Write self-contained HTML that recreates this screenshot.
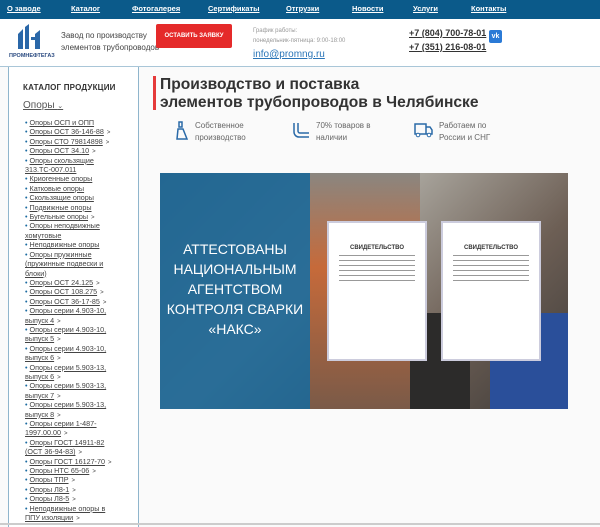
<!DOCTYPE html>
<html><head><meta charset="utf-8"><style>
*{margin:0;padding:0;box-sizing:border-box}
body{width:600px;height:525px;overflow:hidden;background:#fafafa;font-family:"Liberation Sans","Noto Sans CJK SC",sans-serif;position:relative;color:#333}
.nav{position:absolute;left:0;top:0;width:600px;height:19px;background:#0b5a8a;}
.nav a{position:absolute;top:4px;color:#fff;font-size:7.5px;font-weight:bold;text-decoration:underline}
.hdr{position:absolute;left:0;top:19px;width:600px;height:48px;background:#fff;border-bottom:1px solid #a9c6d8}
.side{position:absolute;left:8px;top:67px;width:131px;height:460px;border-left:1px solid #8fb5cc;border-right:1px solid #8fb5cc;background:#fff}
.side .t{position:absolute;left:14px;top:16px;font-size:8px;font-weight:bold;color:#333;letter-spacing:.2px}
.side .op{position:absolute;left:14px;top:33px;font-size:10px;color:#555;text-decoration:underline}
.list{position:absolute;left:16px;top:51px;width:96px;font-size:7.2px;line-height:9.4px;color:#444}
.list div{line-height:9.4px}
.list div a{text-decoration:underline;color:#444}
.list div:before{content:"• ";color:#1a6aa0}
.ar{font-size:6px;margin-left:3px;line-height:0}
h1{position:absolute;left:160px;top:76px;font-size:15.6px;line-height:18px;font-weight:bold;color:#333}
.bar{position:absolute;left:153px;top:76px;width:3px;height:34px;background:#e53a3a}
.feat{position:absolute;top:120px;font-size:8px;line-height:12px;color:#666}
.ban{position:absolute;left:160px;top:173px;width:408px;height:236px;background:linear-gradient(135deg,#7a7a78,#a8a49c 40%,#6d5f55 70%,#3d3a38);overflow:hidden}
.blue{position:absolute;left:0;top:0;width:150px;height:236px;background:rgba(20,100,150,.85)}
.blue p{position:absolute;left:0;top:66px;width:150px;text-align:center;color:#fff;font-size:14px;line-height:20px}
.cert{position:absolute;top:48px;width:100px;height:140px;background:#fff;border:2px solid #ccd;}
.cert b{display:block;text-align:center;font-size:6px;margin-top:22px;color:#333}
.cert i{display:block;margin:4px 10px;height:1px;background:#999}
</style></head><body>
<div class="nav">
<a style="left:7px">О заводе</a><a style="left:71px">Каталог</a><a style="left:132px">Фотогалерея</a><a style="left:208px">Сертификаты</a><a style="left:286px">Отгрузки</a><a style="left:352px">Новости</a><a style="left:413px">Услуги</a><a style="left:471px">Контакты</a>
</div>
<div class="hdr">
<svg style="position:absolute;left:17px;top:5px" width="26" height="25" viewBox="0 0 26 25"><path d="M1 25V10L6 5V25ZM8 25V3L12 0V25ZM14 25V13H18V25H23V6L18 10V16H14Z" fill="#2a67a8"/></svg>
<div style="position:absolute;left:9px;top:34px;font-size:5.5px;font-weight:bold;color:#2a4a80">ПРОМНЕФТЕГАЗ</div>
<div style="position:absolute;left:61px;top:11px;font-size:8px;line-height:12px;color:#444">Завод по производству<br>элементов трубопроводов</div>
<div style="position:absolute;left:156px;top:5px;width:76px;height:24px;background:#e52a2a;border-radius:2px;color:#fff;font-size:6px;font-weight:bold;text-align:center;line-height:24px;white-space:nowrap">ОСТАВИТЬ ЗАЯВКУ</div>
<div style="position:absolute;left:253px;top:7px;font-size:6px;line-height:10px;color:#999">График работы:<br>понедельник-пятница: 9:00-18:00</div>
<div style="position:absolute;left:253px;top:30px;font-size:10px;color:#2a75b8;text-decoration:underline">info@promng.ru</div>
<div style="position:absolute;left:409px;top:7px;font-size:9px;line-height:14px;font-weight:bold;color:#333;text-decoration:underline;white-space:nowrap">+7 (804) 700-78-01<br>+7 (351) 216-08-01</div>
<div style="position:absolute;left:489px;top:11px;width:13px;height:13px;background:#2a7ad6;border-radius:2px;color:#fff;font-size:7px;font-weight:bold;text-align:center;line-height:13px">vk</div>
</div>
<div class="side">
<div class="t">КАТАЛОГ ПРОДУКЦИИ</div>
<div class="op">Опоры <span style="font-size:7px;text-decoration:none">⌄</span></div>
<div class="list">
<div><a>Опоры ОСП и ОПП</a></div>
<div><a>Опоры ОСТ 36-146-88</a><span class="ar">&gt;</span></div>
<div><a>Опоры СТО 79814898</a><span class="ar">&gt;</span></div>
<div><a>Опоры ОСТ 34.10</a><span class="ar">&gt;</span></div>
<div><a>Опоры скользящие 313.ТС-007.011</a></div>
<div><a>Криогенные опоры</a></div>
<div><a>Катковые опоры</a></div>
<div><a>Скользящие опоры</a></div>
<div><a>Подвижные опоры</a></div>
<div><a>Бугельные опоры</a><span class="ar">&gt;</span></div>
<div><a>Опоры неподвижные хомутовые</a></div>
<div><a>Неподвижные опоры</a></div>
<div><a>Опоры пружинные (пружинные подвески и блоки)</a></div>
<div><a>Опоры ОСТ 24.125</a><span class="ar">&gt;</span></div>
<div><a>Опоры ОСТ 108.275</a><span class="ar">&gt;</span></div>
<div><a>Опоры ОСТ 36-17-85</a><span class="ar">&gt;</span></div>
<div><a>Опоры серии 4.903-10, выпуск 4</a><span class="ar">&gt;</span></div>
<div><a>Опоры серии 4.903-10, выпуск 5</a><span class="ar">&gt;</span></div>
<div><a>Опоры серии 4.903-10, выпуск 6</a><span class="ar">&gt;</span></div>
<div><a>Опоры серии 5.903-13, выпуск 6</a><span class="ar">&gt;</span></div>
<div><a>Опоры серии 5.903-13, выпуск 7</a><span class="ar">&gt;</span></div>
<div><a>Опоры серии 5.903-13, выпуск 8</a><span class="ar">&gt;</span></div>
<div><a>Опоры серии 1-487-1997.00.00</a><span class="ar">&gt;</span></div>
<div><a>Опоры ГОСТ 14911-82 (ОСТ 36-94-83)</a><span class="ar">&gt;</span></div>
<div><a>Опоры ГОСТ 16127-70</a><span class="ar">&gt;</span></div>
<div><a>Опоры НТС 65-06</a><span class="ar">&gt;</span></div>
<div><a>Опоры ТПР</a><span class="ar">&gt;</span></div>
<div><a>Опоры Л8-1</a><span class="ar">&gt;</span></div>
<div><a>Опоры Л8-5</a><span class="ar">&gt;</span></div>
<div><a>Неподвижные опоры в ППУ изоляции</a><span class="ar">&gt;</span></div>
</div>
</div>
<div class="bar"></div>
<h1>Производство и поставка<br>элементов трубопроводов в Челябинске</h1>
<svg style="position:absolute;left:176px;top:121px" width="12" height="19" viewBox="0 0 12 19"><path d="M3 1h3v5H3zM2 8h5l4 10H1z" fill="none" stroke="#2a6aa8" stroke-width="1.5"/></svg>
<div class="feat" style="left:195px">Собственное<br>производство</div>
<svg style="position:absolute;left:292px;top:122px" width="18" height="17" viewBox="0 0 18 17"><path d="M2 1v9a5 5 0 0 0 5 5h10M6 1v8a2 2 0 0 0 2 2h9" fill="none" stroke="#2a6aa8" stroke-width="1.5"/></svg>
<div class="feat" style="left:316px">70% товаров в<br>наличии</div>
<svg style="position:absolute;left:414px;top:123px" width="19" height="15" viewBox="0 0 19 15"><path d="M1 1h11v10H1zM12 4h4l2 3v4h-6" fill="none" stroke="#2a6aa8" stroke-width="1.5"/><circle cx="4" cy="12" r="1.8" fill="#fff" stroke="#2a6aa8"/><circle cx="15" cy="12" r="1.8" fill="#fff" stroke="#2a6aa8"/></svg>
<div class="feat" style="left:439px">Работаем по<br>России и СНГ</div>
<div class="ban">
<div style="position:absolute;left:150px;top:0;width:110px;height:236px;background:linear-gradient(#8a8680,#c66a3a 40%,#7a5a48)"></div>
<div style="position:absolute;left:250px;top:140px;width:60px;height:96px;background:#2c2b2a"></div>
<div style="position:absolute;left:330px;top:140px;width:78px;height:96px;background:#2a4f9a"></div>
<div class="blue"><p>АТТЕСТОВАНЫ<br>НАЦИОНАЛЬНЫМ<br>АГЕНТСТВОМ<br>КОНТРОЛЯ СВАРКИ<br>«НАКС»</p></div>
<div class="cert" style="left:167px"><b>СВИДЕТЕЛЬСТВО</b><i></i><i></i><i></i><i></i><i></i><i></i></div>
<div class="cert" style="left:281px"><b>СВИДЕТЕЛЬСТВО</b><i></i><i></i><i></i><i></i><i></i><i></i></div>
</div>
<div style="position:absolute;left:0;top:523px;width:600px;height:2px;background:#ccc"></div>
</body></html>
